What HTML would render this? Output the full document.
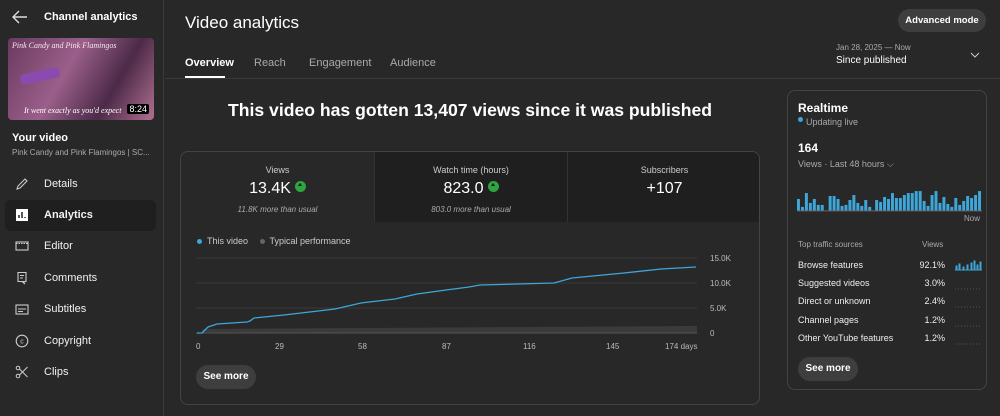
<!DOCTYPE html>
<html><head><meta charset="utf-8"><style>
*{box-sizing:border-box;margin:0;padding:0}
body{width:1000px;height:416px;background:#282828;color:#fff;font-family:"Liberation Sans",sans-serif;position:relative;overflow:hidden}
.abs{position:absolute}
.side{left:0;top:0;width:164px;height:416px;border-right:1px solid #3a3a3a}
.nav{position:absolute;left:5px;width:151px;height:31px;border-radius:6px;font-size:11px;line-height:31px;padding-left:39px;color:#f1f1f1}
.nav svg{position:absolute;left:10px;top:8px}
.muted{color:#aaa}
.tab{position:absolute;top:57px;font-size:11px;color:#aaa}
.mt{position:absolute;top:0;height:70px;text-align:center}
.mt .l{font-size:9px;color:#ccc;margin-top:13px}
.mt .v{font-size:16px;margin-top:5px}
.mt .s{font-size:8px;color:#aaa;font-style:italic;margin-top:7px}
.up{display:inline-block;width:11px;height:11px;border-radius:50%;background:#2ba640;vertical-align:1px;margin-left:4px;position:relative}
.up:after{content:"";position:absolute;left:3px;top:2px;border:2.5px solid transparent;border-bottom:3px solid #111;border-top:0}
.row{position:absolute;left:10px;width:180px;font-size:9px;color:#eee}
.row span{position:absolute;right:33px}
</style></head><body>
<div class="abs side">
<svg class="abs" style="left:12px;top:10px" width="16" height="14" viewBox="0 0 16 14"><path d="M15 7H2M7 1L1 7l6 6" stroke="#ddd" stroke-width="1.4" fill="none"/></svg>
<div class="abs" style="left:44px;top:11px;font-size:11px;font-weight:bold">Channel analytics</div>
<div class="abs" style="left:8px;top:38px;width:146px;height:82px;background:linear-gradient(120deg,#6a3a60,#9a5f8a 40%,#4c2a48 70%,#b07090);border-radius:4px;overflow:hidden">
<div style="font-size:8px;color:#f6e6f0;font-family:'Liberation Serif',serif;font-style:italic;margin:3px 4px">Pink Candy and Pink Flamingos</div>
<div class="abs" style="left:12px;top:33px;width:40px;height:10px;background:#8a4bb0;border-radius:4px;transform:rotate(-12deg)"></div>
<div class="abs" style="left:16px;top:68px;font-size:8px;font-family:'Liberation Serif',serif;font-style:italic">It went exactly as you'd expect</div>
<div class="abs" style="right:5px;bottom:6px;background:#000;font-size:9px;padding:0 2px;border-radius:2px">8:24</div></div>
<div class="abs" style="left:12px;top:132px;font-size:11px;font-weight:bold">Your video</div>
<div class="abs muted" style="left:12px;top:148px;font-size:8px">Pink Candy and Pink Flamingos | SC...</div>
<div class="nav" style="top:169px"><svg width="14" height="14" viewBox="0 0 14 14"><path d="M2 12l1-3 7-7 2 2-7 7z" stroke="#ccc" fill="none" stroke-width="1.1"/></svg>Details</div>
<div class="nav" style="top:200px;background:#1f1f1f;font-weight:bold"><svg width="14" height="14" viewBox="0 0 14 14"><rect x="1" y="1" width="12" height="12" fill="#fff"/><path d="M4 10V7M7 10V4M10 10V9" stroke="#222" stroke-width="1.5"/></svg>Analytics</div>
<div class="nav" style="top:231px"><svg width="14" height="14" viewBox="0 0 14 14"><rect x="1" y="3" width="12" height="8" fill="none" stroke="#ccc" stroke-width="1.1"/><path d="M1 4.5h12" stroke="#ccc" stroke-dasharray="1.5 1"/></svg>Editor</div>
<div class="nav" style="top:263px"><svg width="14" height="14" viewBox="0 0 14 14"><path d="M3 1.5h8v9H8l2 2.5-3-2.5H3z" fill="none" stroke="#ccc" stroke-width="1.1"/><path d="M5 4.5h4M5 7h3" stroke="#ccc"/></svg>Comments</div>
<div class="nav" style="top:294px"><svg width="14" height="14" viewBox="0 0 14 14"><rect x="1" y="3" width="12" height="9" fill="none" stroke="#ccc" stroke-width="1.1"/><path d="M3 7h8M3 9.5h5" stroke="#ccc"/></svg>Subtitles</div>
<div class="nav" style="top:326px"><svg width="14" height="14" viewBox="0 0 14 14"><circle cx="7" cy="7" r="5.8" fill="none" stroke="#ccc" stroke-width="1.1"/><text x="7" y="9.5" font-size="7" fill="#ccc" text-anchor="middle" font-family="Liberation Sans">c</text></svg>Copyright</div>
<div class="nav" style="top:357px"><svg width="14" height="14" viewBox="0 0 14 14"><circle cx="3" cy="3" r="1.8" fill="none" stroke="#ccc"/><circle cx="3" cy="11" r="1.8" fill="none" stroke="#ccc"/><path d="M4.5 4l8 8M4.5 10l8-8" stroke="#ccc"/></svg>Clips</div>
</div>
<div class="abs" style="left:185px;top:13px;font-size:17px">Video analytics</div>
<div class="abs" style="left:898px;top:9px;width:88px;height:23px;border-radius:12px;background:#3e3e3e;font-size:9.5px;line-height:23px;text-align:center;font-weight:bold;white-space:nowrap">Advanced mode</div>
<div class="abs muted" style="left:836px;top:43px;font-size:8px">Jan 28, 2025 — Now</div>
<div class="abs" style="left:836px;top:55px;font-size:10px">Since published</div>
<svg class="abs" style="left:970px;top:52px" width="10" height="6"><path d="M1 1l4 4 4-4" stroke="#ccc" fill="none"/></svg>
<div class="tab" style="left:185px;color:#fff;font-weight:bold">Overview</div>
<div class="abs" style="left:185px;top:76px;width:40px;height:2px;background:#fff"></div>
<div class="tab" style="left:254px">Reach</div>
<div class="tab" style="left:309px">Engagement</div>
<div class="tab" style="left:390px">Audience</div>
<div class="abs" style="left:165px;top:78px;width:835px;height:1px;background:#3a3a3a"></div>
<div class="abs" style="left:180px;top:100px;width:580px;text-align:center;font-size:17.6px;font-weight:bold">This video has gotten 13,407 views since it was published</div>
<div class="abs" style="left:180px;top:151px;width:580px;height:254px;border:1px solid #444;border-radius:8px;overflow:hidden">
<div class="mt" style="left:0;width:193px"><div class="l">Views</div><div class="v">13.4K<span class="up"></span></div><div class="s">11.8K more than usual</div></div>
<div class="mt" style="left:193px;width:193px;background:#1f1f1f;border-left:1px solid #333"><div class="l">Watch time (hours)</div><div class="v">823.0<span class="up"></span></div><div class="s">803.0 more than usual</div></div>
<div class="mt" style="left:386px;width:194px;background:#1f1f1f;border-left:1px solid #333"><div class="l">Subscribers</div><div class="v">+107</div></div>
<div class="abs" style="left:16px;top:84px;font-size:9px;color:#ccc"><span style="display:inline-block;width:5px;height:5px;border-radius:50%;background:#3ea6d8;margin-right:5px"></span>This video <span style="display:inline-block;width:5px;height:5px;border-radius:50%;background:#666;margin:0 5px 0 9px"></span>Typical performance</div>
</div>
<svg class="abs" style="left:180px;top:250px" width="560" height="110">
<g stroke="#3a3a3a"><line x1="16" y1="8" x2="517" y2="8"/><line x1="16" y1="33" x2="517" y2="33"/><line x1="16" y1="58" x2="517" y2="58"/></g>
<path d="M22 83L22 79L517 76V83z" fill="#3b3b3b"/>
<line x1="16" y1="83" x2="517" y2="83" stroke="#555"/>
<polyline fill="none" stroke="#3ea6d8" stroke-width="1.3" points="17,83 22,83 28,77 37,74 67,72 70,71 74,68 104,65 155,59 181,53 215,49 237,44 266,40 289,37 300,35 374,33 392,28 444,23 481,19 516,17"/>
<g fill="#bbb" font-size="8" font-family="Liberation Sans"><text x="530" y="11">15.0K</text><text x="530" y="36">10.0K</text><text x="530" y="61">5.0K</text><text x="530" y="86">0</text>
<text x="16" y="99">0</text><text x="95" y="99">29</text><text x="178" y="99">58</text><text x="262" y="99">87</text><text x="343" y="99">116</text><text x="426" y="99">145</text><text x="485" y="99">174 days</text></g>
</svg>
<div class="abs" style="left:196px;top:365px;width:60px;height:24px;border-radius:12px;background:#3e3e3e;font-size:10px;line-height:24px;text-align:center;font-weight:bold">See more</div>
<div class="abs" style="left:787px;top:90px;width:200px;height:300px;border:1px solid #444;border-radius:8px">
<div class="abs" style="left:10px;top:10px;font-size:12px;font-weight:bold">Realtime</div>
<div class="abs muted" style="left:10px;top:26px;font-size:9px"><span style="display:inline-block;width:5px;height:5px;border-radius:50%;background:#3ea6d8;margin-right:3px;vertical-align:3px"></span>Updating live</div>
<div class="abs" style="left:10px;top:50px;font-size:12px;font-weight:bold">164</div>
<div class="abs muted" style="left:10px;top:68px;font-size:9px">Views · Last 48 hours ⌵</div>
<svg class="abs" style="left:9px;top:90px" width="185" height="31" viewBox="0 0 187 31"><g fill="#3ea6d8">
<rect x="0" y="18" width="3" height="12"/><rect x="4" y="26" width="3" height="4"/><rect x="8" y="12" width="3" height="18"/><rect x="12" y="22" width="3" height="8"/><rect x="16" y="18" width="3" height="12"/><rect x="20" y="24" width="3" height="6"/><rect x="24" y="24" width="3" height="6"/><rect x="32" y="15" width="3" height="15"/><rect x="36" y="15" width="3" height="15"/><rect x="40" y="18" width="3" height="12"/><rect x="44" y="25" width="3" height="5"/><rect x="48" y="24" width="3" height="6"/><rect x="52" y="19" width="3" height="11"/><rect x="56" y="14" width="3" height="16"/><rect x="60" y="22" width="3" height="8"/><rect x="64" y="25" width="3" height="5"/><rect x="68" y="19" width="3" height="11"/><rect x="72" y="26" width="3" height="4"/><rect x="79" y="19" width="3" height="11"/><rect x="83" y="21" width="3" height="9"/><rect x="87" y="16" width="3" height="14"/><rect x="91" y="18" width="3" height="12"/><rect x="95" y="12" width="3" height="18"/><rect x="99" y="17" width="3" height="13"/><rect x="103" y="17" width="3" height="13"/><rect x="107" y="14" width="3" height="16"/><rect x="111" y="12" width="3" height="18"/><rect x="115" y="12" width="3" height="18"/><rect x="119" y="10" width="3" height="20"/><rect x="123" y="10" width="3" height="20"/><rect x="127" y="20" width="3" height="10"/><rect x="131" y="25" width="3" height="5"/><rect x="135" y="14" width="3" height="16"/><rect x="139" y="10" width="3" height="20"/><rect x="143" y="22" width="3" height="8"/><rect x="147" y="16" width="3" height="14"/><rect x="151" y="23" width="3" height="7"/><rect x="155" y="26" width="3" height="4"/><rect x="159" y="17" width="3" height="13"/><rect x="163" y="24" width="3" height="6"/><rect x="167" y="20" width="3" height="10"/><rect x="171" y="15" width="3" height="15"/><rect x="175" y="17" width="3" height="13"/><rect x="179" y="14" width="3" height="16"/><rect x="183" y="10" width="3" height="20"/></g><line x1="0" y1="30" x2="187" y2="30" stroke="#666"/></svg>
<div class="abs muted" style="left:176px;top:123px;font-size:8px">Now</div>
<div class="abs muted" style="left:10px;top:149px;font-size:8px">Top traffic sources</div>
<div class="abs muted" style="left:134px;top:149px;font-size:8px">Views</div>
<div class="row" style="top:169px">Browse features<span>92.1%</span></div>
<div class="row" style="top:187px">Suggested videos<span>3.0%</span></div>
<div class="row" style="top:205px">Direct or unknown<span>2.4%</span></div>
<div class="row" style="top:224px">Channel pages<span>1.2%</span></div>
<div class="row" style="top:242px">Other YouTube features<span>1.2%</span></div>
<svg class="abs" style="left:167px;top:167px" width="28" height="90"><path d="M0 12h27" stroke="#3ea6d8"/><path d="M1 12V8h1v4h2V6h1v6h3V9h1v3h3V7h1v5h3V5h1v7h2V3h1v9h2V7h1v5h2V4h1v8" stroke="#3ea6d8" fill="none"/><g stroke="#555"><path d="M0 31h27M0 49h27M0 68h27M0 86h27" stroke-dasharray="1 2"/></g></svg>
<div class="abs" style="left:10px;top:266px;width:60px;height:24px;border-radius:12px;background:#3e3e3e;font-size:10px;line-height:24px;text-align:center;font-weight:bold">See more</div>
</div>
</body></html>
